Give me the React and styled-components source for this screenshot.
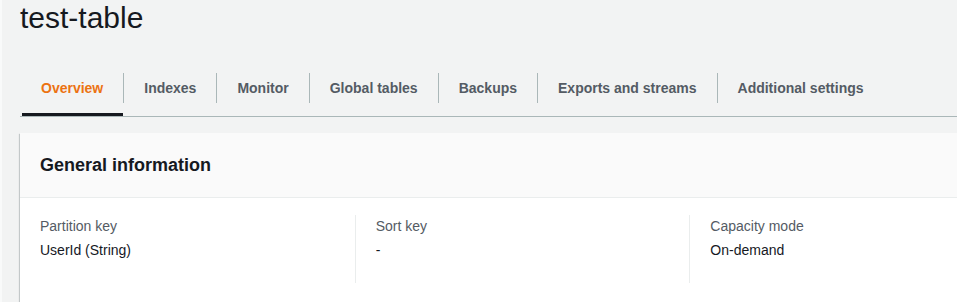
import React from "react";
import styled, { createGlobalStyle } from "styled-components";

const GlobalStyle = createGlobalStyle`
  html, body {
    margin: 0;
    padding: 0;
    background-color: #f2f3f3;
    overflow: hidden;
  }
  body {
    font-family: "Liberation Sans", Arial, sans-serif;
    color: #16191f;
  }
`;

const tabs = [
  "Overview",
  "Indexes",
  "Monitor",
  "Global tables",
  "Backups",
  "Exports and streams",
  "Additional settings",
];

const details = [
  { label: "Partition key", value: "UserId (String)" },
  { label: "Sort key", value: "-" },
  { label: "Capacity mode", value: "On-demand" },
];

const App = () => {
  const [active, setActive] = React.useState(0);

  return (
    <>
      <GlobalStyle />
      <Page>
        <Title>test-table</Title>

        <TabList>
          {tabs.map((tab, i) => (
            <Tab key={tab} active={i === active} onClick={() => setActive(i)}>
              <TabLabel first={i === 0} active={i === active}>
                {tab}
              </TabLabel>
            </Tab>
          ))}
        </TabList>

        <Card>
          <CardHeader>
            <CardTitle>General information</CardTitle>
          </CardHeader>
          <CardBody>
            {details.map((item, i) => (
              <Column key={item.label} first={i === 0}>
                <Label>{item.label}</Label>
                <Value>{item.value}</Value>
              </Column>
            ))}
          </CardBody>
        </Card>
      </Page>
    </>
  );
};
export default App;

const Page = styled.div`
  width: 100%;
  height: 100vh;
  box-sizing: border-box;
  padding-left: 18px;
  border-left: 2px solid #f9fafa;
  overflow: hidden;
`;

const Title = styled.h1`
  margin: 0;
  font-size: 30px;
  line-height: 36px;
  font-weight: 400;
  color: #16191f;
`;

const TabList = styled.div`
  display: flex;
  margin-top: 28px;
  padding-left: 2px;
  border-bottom: 1px solid #aab7b8;
`;

const Tab = styled.div`
  padding: 9px 0 13px;
  cursor: pointer;
  box-shadow: ${(p) => (p.active ? "inset 0 -3px 0 #16191f" : "none")};
`;

const TabLabel = styled.span`
  display: block;
  line-height: 30px;
  padding: 0 20px 0 ${(p) => (p.first ? "19px" : "20px")};
  border-left: ${(p) => (p.first ? "none" : "1px solid #aab7b8")};
  font-size: 14px;
  font-weight: 700;
  color: ${(p) => (p.active ? "#ec7211" : "#545b64")};
  white-space: nowrap;
`;

const Card = styled.div`
  width: 1004px;
  margin-top: 16px;
  background-color: #ffffff;
  box-shadow: 0 1px 1px 0 rgba(0, 28, 36, 0.3),
    1px 1px 1px 0 rgba(0, 28, 36, 0.15), -1px 1px 1px 0 rgba(0, 28, 36, 0.15);
`;

const CardHeader = styled.div`
  padding: 20px;
  background-color: #fafafa;
  border-bottom: 1px solid #eaeded;
`;

const CardTitle = styled.h2`
  margin: 0;
  font-size: 18px;
  line-height: 24px;
  font-weight: 700;
  color: #16191f;
`;

const CardBody = styled.div`
  display: grid;
  grid-template-columns: repeat(3, 1fr);
  padding: 17px 0 40px;
`;

const Column = styled.div`
  min-height: 68px;
  padding-left: 20px;
  border-left: ${(p) => (p.first ? "none" : "1px solid #eaeded")};
`;

const Label = styled.div`
  font-size: 14px;
  line-height: 22px;
  color: #545b64;
`;

const Value = styled.div`
  margin-top: 2px;
  font-size: 14px;
  line-height: 22px;
  color: #16191f;
`;
